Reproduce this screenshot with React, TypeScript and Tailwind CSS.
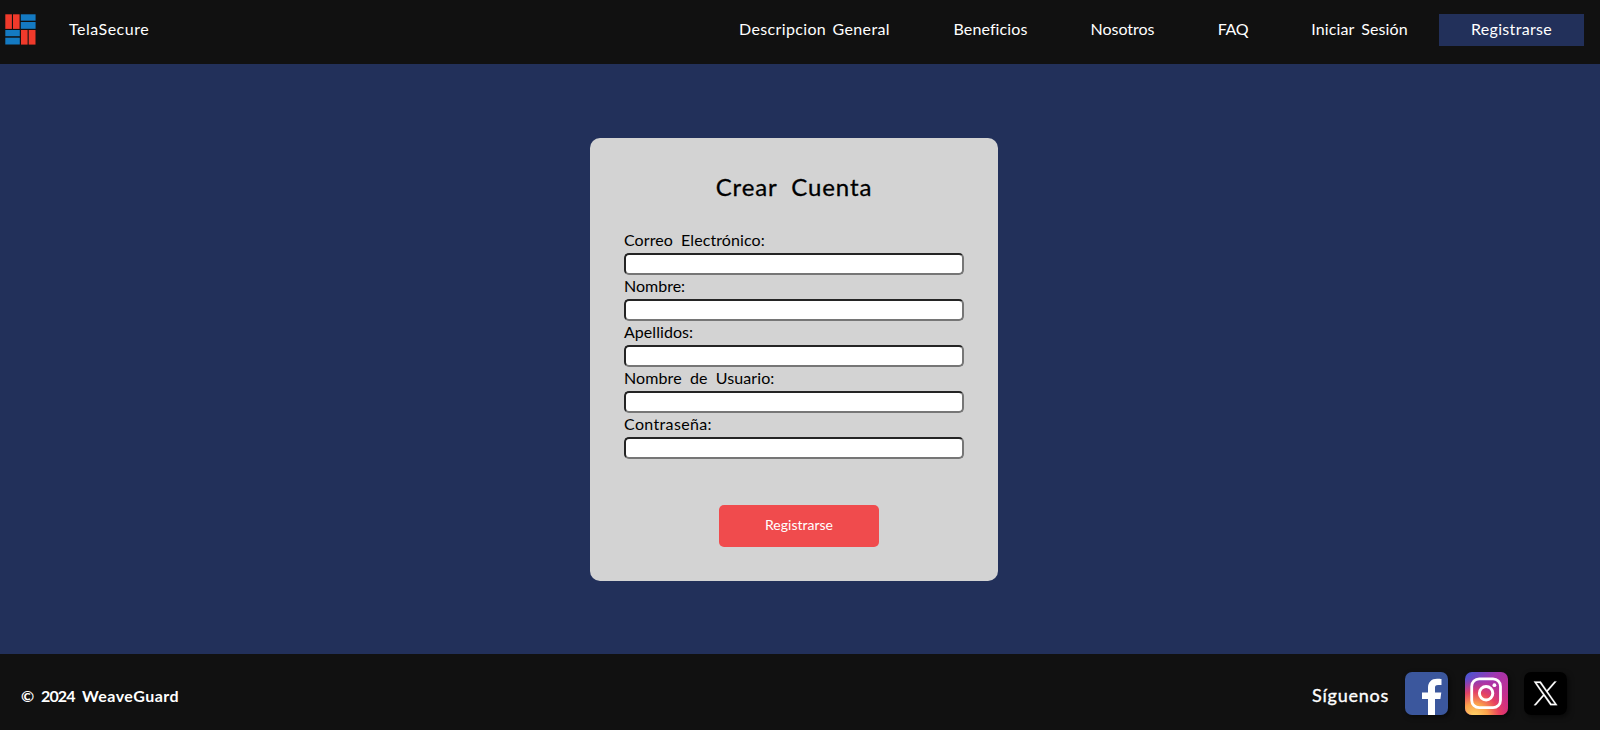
import type { ReactNode } from "react";

const links = [
  { label: "Descripcion General", className: "w-[215px] tracking-[0.35px] [word-spacing:2px]" },
  { label: "Beneficios", className: "w-[137px] tracking-[0.1px]" },
  { label: "Nosotros", className: "w-[127px] tracking-[0px]" },
  { label: "FAQ", className: "w-[94px] tracking-[-0.3px]" },
  { label: "Iniciar Sesión", className: "w-[159px] tracking-[0.1px] [word-spacing:3px]" },
  { label: "Registrarse", className: "w-[145px] bg-[#22305a] tracking-[0.3px]" },
];

const fields = [
  { label: "Correo Electrónico:", type: "email", className: "tracking-[0.08px]" },
  { label: "Nombre:", type: "text", className: "tracking-[0px]" },
  { label: "Apellidos:", type: "text", className: "tracking-[0.05px]" },
  { label: "Nombre de Usuario:", type: "text", className: "tracking-[0.1px]" },
  { label: "Contraseña:", type: "password", className: "tracking-[0.35px]" },
];

function Logo() {
  return (
    <svg width="31" height="31" viewBox="0 0 31 31" aria-hidden="true">
      <g fill="#f03a2b">
        <rect x="0.3" y="0.3" width="6.6" height="14.6" />
        <rect x="8" y="0.3" width="6.6" height="14.6" />
        <rect x="16" y="16" width="6.6" height="14.6" />
        <rect x="23.7" y="16" width="6.8" height="14.6" />
      </g>
      <g fill="#147ac2">
        <rect x="15.8" y="0.3" width="14.8" height="6.4" />
        <rect x="15.8" y="8" width="14.8" height="6.8" />
        <rect x="0.3" y="16" width="14.5" height="6.2" />
        <rect x="0.3" y="23.7" width="14.5" height="6.8" />
      </g>
    </svg>
  );
}

function Social({ label, children }: { label: string; children: ReactNode }) {
  return (
    <a
      href="#"
      aria-label={label}
      className="block size-[43px] overflow-hidden rounded-[7px] shadow-[2px_2px_5px_rgba(0,0,0,0.5)]"
    >
      {children}
    </a>
  );
}

function Facebook() {
  return (
    <svg width="43" height="43" viewBox="0 0 43 43">
      <rect width="43" height="43" fill="#3b579d" />
      <path
        fill="#fff"
        d="M23 43V27h-6v-6.5h6v-4.7C23 10 26.5 6.7 32 6.7c2 0 3.6.1 4.5.3v6h-3.4c-2.6 0-3.1 1.3-3.1 3.1v4.4h6.3L35.400 27H30v16z"
      />
    </svg>
  );
}

function Instagram() {
  return (
    <svg width="43" height="43" viewBox="0 0 43 43">
      <defs>
        <linearGradient id="ig-base" x1="0.1" y1="0" x2="0.9" y2="1">
          <stop offset="0" stopColor="#4b55d2" />
          <stop offset="0.35" stopColor="#a535ae" />
          <stop offset="1" stopColor="#d92a78" />
        </linearGradient>
        <radialGradient id="ig-warm" cx="0.22" cy="1.05" r="0.9">
          <stop offset="0" stopColor="#ffd76a" />
          <stop offset="0.35" stopColor="#fba24c" />
          <stop offset="0.65" stopColor="#ee4458" stopOpacity="0.85" />
          <stop offset="1" stopColor="#d0308a" stopOpacity="0" />
        </radialGradient>
      </defs>
      <rect width="43" height="43" fill="url(#ig-base)" />
      <rect width="43" height="43" fill="url(#ig-warm)" />
      <g fill="none" stroke="#fff" strokeWidth="2.8">
        <rect x="6.7" y="6.9" width="28.8" height="28.8" rx="7.5" />
        <circle cx="21.1" cy="21.3" r="6.7" strokeWidth="3" />
      </g>
      <circle cx="29.4" cy="13.2" r="1.9" fill="#fff" />
    </svg>
  );
}

function XLogo() {
  return (
    <svg width="43" height="43" viewBox="0 0 43 43">
      <rect width="43" height="43" fill="#000" />
      <g transform="translate(9.3 8.700) scale(1.04 1.02)" fill="#fff" stroke="#fff" strokeWidth="0.25">
        <path d="M13.9 10.6 22.3.7h-2l-7.3 8.6L7.2.7H.5l8.8 13L.5 24h2l7.7-9.100 6.2 9.100h6.700zm-2.7 3.2-.9-1.300L3.2 2.200h3.100l5.8 8.300.9 1.300 7.500 10.800h-3.100z" />
      </g>
    </svg>
  );
}

export default function App() {
  return (
    <div className="flex h-[730px] w-full flex-col bg-[#22305a] font-['Lato','Liberation_Sans',sans-serif] text-base">
      <header className="flex h-16 shrink-0 items-start justify-between bg-[#111111] pr-4 pl-[5px] text-white">
        <div className="flex items-start">
          <div className="pt-[14px]">
            <Logo />
          </div>
          <span className="pt-[14px] pl-[33px] leading-[30px] tracking-[0.5px]">TelaSecure</span>
        </div>
        <nav className="flex pt-[14px] leading-[30px]">
          {links.map((link) => (
            <a key={link.label} href="#" className={`block h-8 text-center whitespace-nowrap ${link.className}`}>
              {link.label}
            </a>
          ))}
        </nav>
      </header>

      <main className="flex h-[590px] shrink-0 justify-center pt-[74px] pr-3">
        <form className="flex h-[443px] w-[408px] flex-col rounded-[10px] bg-[#d3d3d3] px-[34px] pt-[34px] text-black">
          <h1 className="h-[57px] text-center text-2xl leading-[30px] tracking-[0.9px] [-webkit-text-stroke:0.3px_black] [word-spacing:7px]">
            Crear Cuenta
          </h1>
          {fields.map((field) => (
            <label key={field.label} className="block h-[46px]">
              <span className={`block h-6 leading-[22px] [word-spacing:4px] ${field.className}`}>{field.label}</span>
              <input
                type={field.type}
                className="block h-[22px] w-full rounded-[5px] border-2 border-t-[#242424] border-r-[#767676] border-b-[#767676] border-l-[#242424] bg-white px-1 text-sm"
              />
            </label>
          ))}
          <button
            type="button"
            className="mt-[46px] ml-[95px] h-[42px] w-40 rounded-[5px] bg-[#f04b4d] pb-0.5 text-sm text-white"
          >
            Registrarse
          </button>
        </form>
      </main>

      <footer className="flex h-[76px] shrink-0 items-start justify-between bg-[#111111] pr-[33px] pl-[21px] text-white">
        <p className="flex pt-[30px] leading-6 font-bold">
          <span className="w-5 whitespace-pre">© </span>
          <span className="w-[41px] tracking-[-0.9px] whitespace-pre">2024 </span>
          <span className="tracking-[0.45px]">WeaveGuard</span>
        </p>
        <div className="flex items-start pt-[18px]">
          <span className="mr-[16px] pt-3 text-lg leading-[22px] tracking-[0.75px] [-webkit-text-stroke:0.35px_white]">
            Síguenos
          </span>
          <div className="flex gap-[16.500px]">
            <Social label="Facebook">
              <Facebook />
            </Social>
            <Social label="Instagram">
              <Instagram />
            </Social>
            <Social label="X">
              <XLogo />
            </Social>
          </div>
        </div>
      </footer>
    </div>
  );
}
